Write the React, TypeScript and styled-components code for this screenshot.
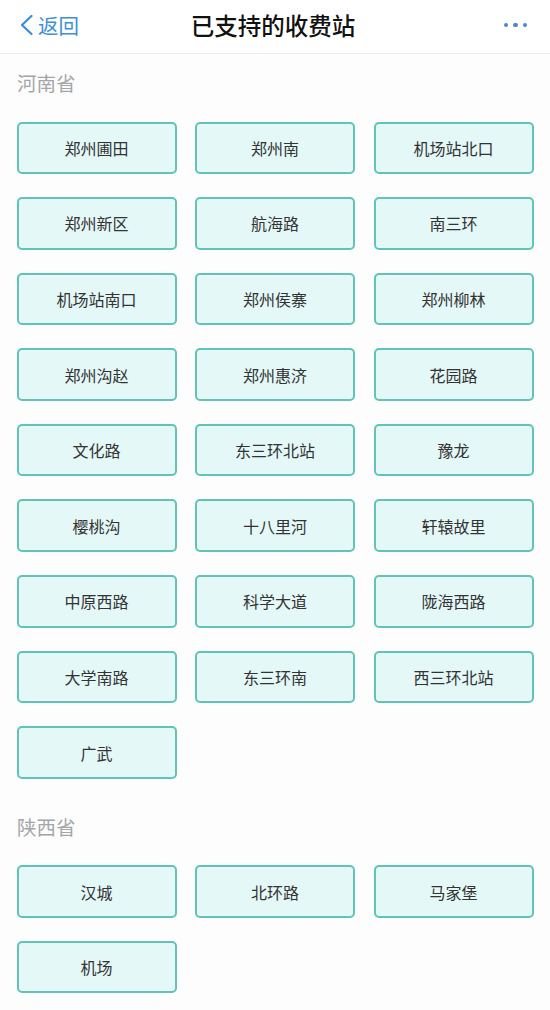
import React from "react";
import styled, { createGlobalStyle } from "styled-components";

const Global = createGlobalStyle`
  html, body { margin: 0; padding: 0; background: #fdfdfe; }
  body { font-family: "Noto Sans CJK SC", "Noto Sans", sans-serif; }
  * { box-sizing: border-box; }
`;

const Page = styled.div`
  width: 550px;
  min-height: 1010px;
  background: #fdfdfe;
`;

const Header = styled.header`
  height: 54px;
  display: grid;
  grid-template-columns: 1fr auto 1fr;
  align-items: center;
  padding: 0 23px 3px 19px;
  background: #ffffff;
  border-bottom: 1px solid #ececee;
`;

const Back = styled.div`
  display: flex;
  align-items: center;
  gap: 4px;
  color: #3d8fd8;
  font-size: 20.5px;
  line-height: 1;
  justify-self: start;
`;

const Title = styled.h1`
  margin: 0;
  font-size: 23.5px;
  font-weight: 500;
  color: #111;
  letter-spacing: 0;
`;

const More = styled.div`
  justify-self: end;
  display: flex;
  gap: 5px;
`;

const Dot = styled.span`
  width: 4.5px;
  height: 4.5px;
  border-radius: 50%;
  background: #4a86d4;
`;

const Content = styled.main`
  padding-top: 15px;
`;

const Section = styled.section`
  & + & {
    margin-top: 34px;
  }
`;

const Province = styled.div`
  padding-left: 17px;
  font-size: 19.5px;
  line-height: 28px;
  color: #a5a5a9;
  margin-bottom: 24.5px;
`;

const Grid = styled.div`
  display: grid;
  grid-template-columns: repeat(3, 160px);
  column-gap: 18.5px;
  row-gap: 23.1px;
  padding: 0 17px 0 16.5px;
`;

const Station = styled.div`
  height: 52.5px;
  display: flex;
  align-items: center;
  justify-content: center;
  background: #e4f8f8;
  border: 2px solid #62c4b7;
  border-radius: 5px;
  font-size: 16px;
  color: #333;
`;

const data: { name: string; stations: string[] }[] = [
  {
    name: "河南省",
    stations: [
      "郑州圃田", "郑州南", "机场站北口",
      "郑州新区", "航海路", "南三环",
      "机场站南口", "郑州侯寨", "郑州柳林",
      "郑州沟赵", "郑州惠济", "花园路",
      "文化路", "东三环北站", "豫龙",
      "樱桃沟", "十八里河", "轩辕故里",
      "中原西路", "科学大道", "陇海西路",
      "大学南路", "东三环南", "西三环北站",
      "广武",
    ],
  },
  {
    name: "陕西省",
    stations: ["汉城", "北环路", "马家堡", "机场"],
  },
];

export default function App() {
  return (
    <Page>
      <Global />
      <Header>
        <Back>
          <svg width="15" height="22" viewBox="0 0 15 22">
            <path d="M12.5 2 L3 11 L12.5 20" fill="none" stroke="#3d8fd8" strokeWidth="2.3" strokeLinecap="round" strokeLinejoin="round" />
          </svg>
          <span>返回</span>
        </Back>
        <Title>已支持的收费站</Title>
        <More>
          <Dot />
          <Dot />
          <Dot />
        </More>
      </Header>
      <Content>
        {data.map((p) => (
          <Section key={p.name}>
            <Province>{p.name}</Province>
            <Grid>
              {p.stations.map((s) => (
                <Station key={s}>{s}</Station>
              ))}
            </Grid>
          </Section>
        ))}
      </Content>
    </Page>
  );
}
